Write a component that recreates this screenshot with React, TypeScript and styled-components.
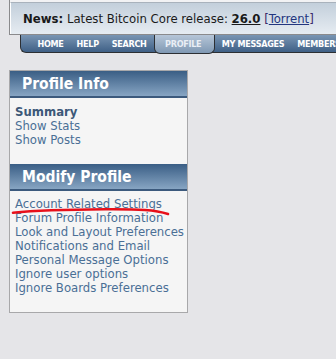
import React from 'react'
import styled, { createGlobalStyle } from 'styled-components'

const Global = createGlobalStyle`
  body {
    margin: 0;
    background: #e5e5e8;
    font-family: "DejaVu Sans Condensed", "DejaVu Sans", sans-serif;
  }
`

const Page = styled.div({
  position: 'relative',
  width: 336,
  height: 359,
  overflow: 'hidden',
})

const NewsBox = styled.div({
  marginLeft: 9,
  borderLeft: '1px solid #8a8a8c',
  borderBottom: '1px solid #8a8a8c',
  background: '#f2f2f4',
  paddingTop: 2,
})

const NewsInner = styled.div({
  borderTop: '1px solid #a9b2bc',
  borderLeft: '1px solid #ffffff',
  height: 31,
  lineHeight: '31px',
  paddingLeft: 12,
  background: 'linear-gradient(#c3cfdb, #e6ecf2)',
  fontSize: 13,
  color: '#1a1a1a',
  whiteSpace: 'nowrap',
})

const Release = styled.a({
  fontWeight: 'bold',
  color: '#1a1a1a',
  textDecoration: 'underline',
})

const Bracket = styled.span({
  color: '#3a2a6a',
})

const TorrentLink = styled.a({
  color: '#23367f',
  textDecoration: 'underline',
})

const TabBar = styled.div({
  marginLeft: 20,
  height: 17,
  display: 'flex',
  alignItems: 'stretch',
  background: 'linear-gradient(#7995b3, #3f6086)',
  borderLeft: '1px solid #2c2f33',
  borderBottom: '1px solid #2c2f33',
  borderBottomLeftRadius: 6,
  paddingLeft: 10,
  whiteSpace: 'nowrap',
})

const Tab = styled.span<{ $active?: boolean }>(({ $active }) => ({
  flexShrink: 0,
  display: 'flex',
  alignItems: 'center',
  padding: $active ? '0 13px 0 10px' : '0 6.5px',
  color: $active ? '#e9eef5' : '#ffffff',
  fontWeight: 'bold',
  fontSize: 9,
  letterSpacing: -0.3,
  background: $active ? 'linear-gradient(#b6c6d8, #7f98b3)' : 'transparent',
  border: $active ? '1px solid #2c2f33' : 'none',
  borderTop: 'none',
  borderRadius: $active ? '0 0 6px 6px' : 0,
  margin: $active ? '0 0 -2px 1px' : 0,
}))

const Sidebar = styled.div({
  margin: '17px 0 0 9px',
  width: 177,
  border: '1px solid #a8a8aa',
  background: '#f5f5f5',
})

const Header = styled.div({
  height: 25,
  display: 'flex',
  alignItems: 'center',
  paddingLeft: 12,
  background: 'linear-gradient(#3a5e85, #87a5c3)',
  borderBottom: '2px solid #3c5a7d',
  color: '#ffffff',
  fontWeight: 'bold',
  fontSize: 15.5,
})

const LinkList = styled.div<{ $top: number; $bottom: number }>(({ $top, $bottom }) => ({
  display: 'flex',
  flexDirection: 'column',
  padding: `${$top}px 5px ${$bottom}px 5px`,
}))

const Item = styled.a<{ $strong?: boolean }>(({ $strong }) => ({
  color: $strong ? '#3c5878' : '#4a6f95',
  fontWeight: $strong ? 'bold' : 'normal',
  fontSize: 13,
  lineHeight: '14px',
  textDecoration: 'none',
  whiteSpace: 'nowrap',
}))

const Scribble = styled.svg({
  position: 'absolute',
  left: 10,
  top: 205,
})

export default function App() {
  const tabs = ['HOME', 'HELP', 'SEARCH', 'PROFILE', 'MY MESSAGES', 'MEMBERS']
  return (
    <Page>
      <Global />
      <NewsBox>
        <NewsInner>
          <b>News:</b> Latest Bitcoin Core release: <Release>26.0</Release>{' '}
          <Bracket>[</Bracket>
          <TorrentLink>Torrent</TorrentLink>
          <Bracket>]</Bracket>
        </NewsInner>
      </NewsBox>
      <TabBar>
        {tabs.map((t) => (
          <Tab key={t} $active={t === 'PROFILE'}>
            {t}
          </Tab>
        ))}
      </TabBar>
      <Sidebar>
        <Header>Profile Info</Header>
        <LinkList $top={7} $bottom={17}>
          <Item $strong>Summary</Item>
          <Item>Show Stats</Item>
          <Item>Show Posts</Item>
        </LinkList>
        <Header>Modify Profile</Header>
        <LinkList $top={6} $bottom={17}>
          <Item>Account Related Settings</Item>
          <Item>Forum Profile Information</Item>
          <Item>Look and Layout Preferences</Item>
          <Item>Notifications and Email</Item>
          <Item>Personal Message Options</Item>
          <Item>Ignore user options</Item>
          <Item>Ignore Boards Preferences</Item>
        </LinkList>
      </Sidebar>
      <Scribble width="164" height="12" viewBox="0 0 164 12">
        <path
          d="M3 7.7 C 25 5.5, 60 4.5, 95 4.3 S 145 4.8, 158 9"
          stroke="#e8101a"
          strokeWidth="2.6"
          fill="none"
          strokeLinecap="round"
        />
      </Scribble>
    </Page>
  )
}
